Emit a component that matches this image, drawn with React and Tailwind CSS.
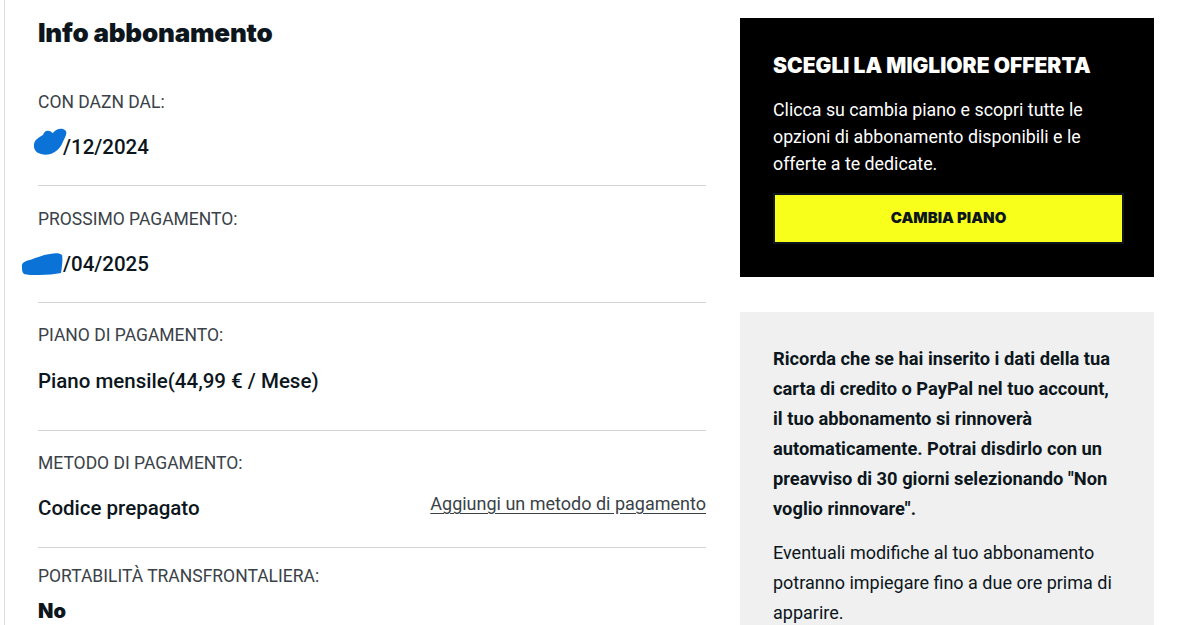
import React from 'react';

const font = { fontFamily: 'Roboto, "Noto Sans", sans-serif' };
const heavy = { fontFamily: 'Inter, Roboto, sans-serif' };

function BlobA() {
  return (
    <svg className="absolute left-[-5px] top-[-5px] w-[34px] h-[28px]" viewBox="0 0 34 28" aria-hidden="true">
      <path
        d="M2 22C0 18 1 13 4 11c2-2 4-3 6-4 1-3 3-5 6-4 2 0 3 2 4 2 2-3 6-5 10-4 3 1 4 3 3 6-1 3-3 6-4 9-2 4-5 7-9 9-4 2-8 2-12 1-3-1-5-2-6-4z"
        fill="#0b72d8"
      />
    </svg>
  );
}

function BlobB() {
  return (
    <svg className="absolute left-[-17px] top-[3px] w-[42px] h-[22px]" viewBox="0 0 42 22" aria-hidden="true">
      <path
        d="M1 14C0 10 4 8 9 7c6-2 12-5 20-6 5-1 10-1 12 1 1 3 0 12-1 18-6 1-14 2-22 2-6 0-12 0-15-1-2-2-2-4-2-7z"
        fill="#0b72d8"
      />
    </svg>
  );
}

function Row({ label, children, pt, gap, pb, border = true }) {
  return (
    <div className={border ? 'border-b border-[#d4d4d4]' : ''} style={{ paddingTop: pt, paddingBottom: pb }}>
      <div className="text-[17.5px] leading-[24px] text-[#3a4248] uppercase">{label}</div>
      <div style={{ marginTop: gap }}>{children}</div>
    </div>
  );
}

export default function App() {
  return (
    <div className="flex bg-white h-[625px] overflow-hidden pl-[4px]" style={font}>
      <section className="w-[702px] border-l border-[#dcdcdc] pl-[33px]">
        <h1 className="mt-[17px] text-[26px] leading-[32px] font-black text-[#0c161c] tracking-[-0.2px]" style={heavy}>
          Info abbonamento
        </h1>

        <Row label="Con DAZN dal:" pt={41} gap={19} pb={24}>
          <div className="relative text-[20.5px] leading-[28px] font-medium text-[#0c161c]">
            <span className="inline-block w-[25px]" />/12/2024
            <BlobA />
          </div>
        </Row>

        <Row label="Prossimo pagamento:" pt={21} gap={19} pb={24}>
          <div className="relative text-[20.5px] leading-[28px] font-medium text-[#0c161c]">
            <span className="inline-block w-[25px]" />/04/2025
            <BlobB />
          </div>
        </Row>

        <Row label="Piano di pagamento:" pt={20} gap={20} pb={35}>
          <div className="text-[20.5px] leading-[28px] font-medium text-[#0c161c]">Piano mensile(44,99 € / Mese)</div>
        </Row>

        <Row label="Metodo di pagamento:" pt={20} gap={19} pb={25}>
          <div className="flex items-center justify-between">
            <span className="text-[20.5px] leading-[28px] font-medium text-[#0c161c]">Codice prepagato</span>
            <a className="text-[18px] leading-[24px] text-[#3a4248] underline underline-offset-[3px] -mt-[8px]" href="#">
              Aggiungi un metodo di pagamento
            </a>
          </div>
        </Row>

        <Row label="Portabilità transfrontaliera:" pt={16} gap={9} pb={0} border={false}>
          <div className="text-[20px] leading-[28px] font-black text-[#0c161c]" style={heavy}>No</div>
        </Row>
      </section>

      <aside className="ml-[34px] w-[414px] shrink-0">
        <div className="mt-[18px] bg-black pl-[33px] pr-[30px] pt-[34px] pb-[33px]">
          <h2 className="text-[21px] leading-[28px] font-black text-white" style={heavy}>
            SCEGLI LA MIGLIORE OFFERTA
          </h2>
          <p className="mt-[16px] text-[17.8px] leading-[27px] text-white">
            Clicca su cambia piano e scopri tutte le
            <br />
            opzioni di abbonamento disponibili e le
            <br />
            offerte a te dedicate.
          </p>
          <button
            className="mt-[16px] w-full h-[51px] bg-[#f7ff1a] border-2 border-[#0c161c] text-[15px] font-black text-[#0c161c]"
            style={heavy}
          >
            CAMBIA PIANO
          </button>
        </div>

        <div className="mt-[35px] bg-[#eff0ef] pl-[33px] pr-[30px] pt-[32px] pb-[30px]">
          <p className="text-[18.3px] leading-[30px] font-bold text-[#0c161c]">
            Ricorda che se hai inserito i dati della tua
            <br />
            carta di credito o PayPal nel tuo account,
            <br />
            il tuo abbonamento si rinnoverà
            <br />
            automaticamente. Potrai disdirlo con un
            <br />
            preavviso di 30 giorni selezionando "Non
            <br />
            voglio rinnovare".
          </p>
          <p className="mt-[14px] text-[18px] leading-[30px] text-[#0c161c]">
            Eventuali modifiche al tuo abbonamento
            <br />
            potranno impiegare fino a due ore prima di
            <br />
            apparire.
          </p>
        </div>
      </aside>
    </div>
  );
}
